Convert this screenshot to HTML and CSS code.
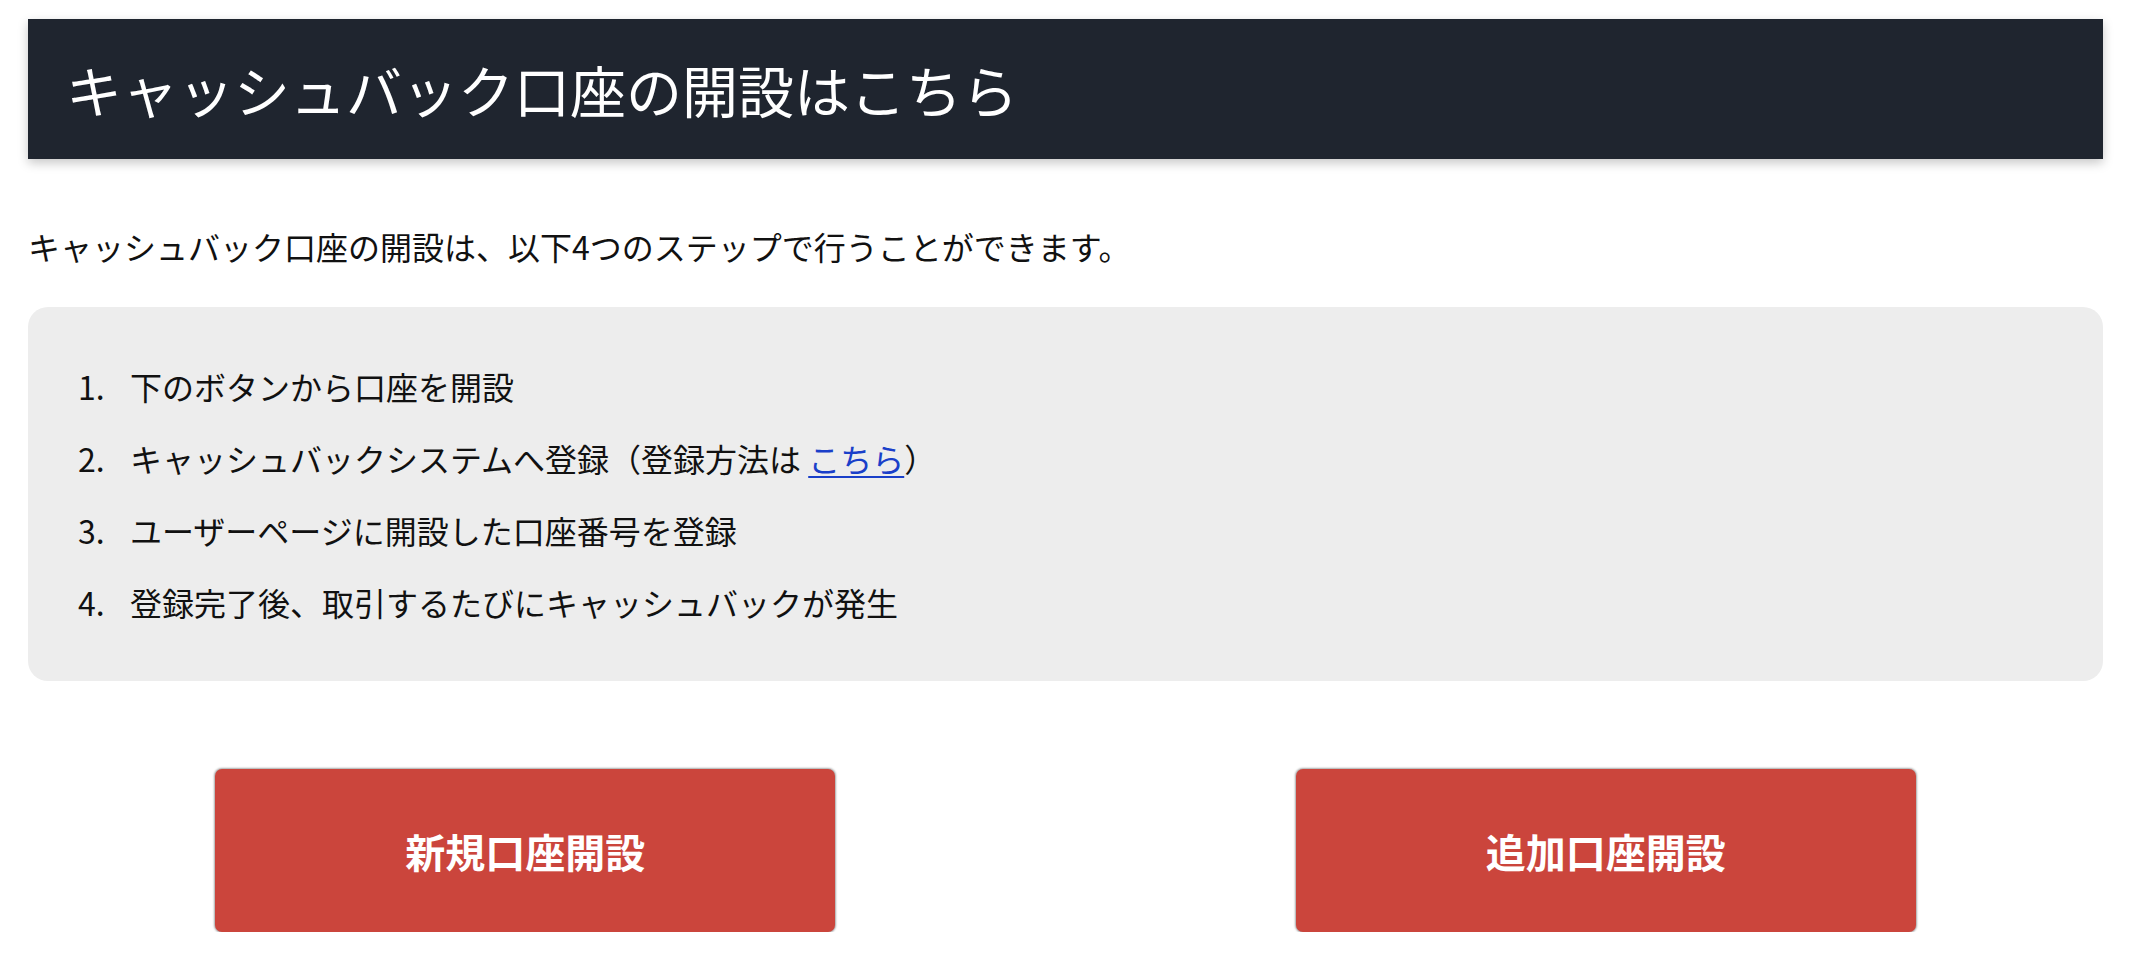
FILE: index.html
```html
<!DOCTYPE html>
<html lang="ja">
<head>
<meta charset="utf-8">
<title>キャッシュバック口座の開設はこちら</title>
<link rel="stylesheet" href="styles.css">
</head>
<body>
<div class="page">
  <header class="title-bar">
    <h1 class="title">キャッシュバック口座の開設はこちら</h1>
  </header>
  <p class="intro">キャッシュバック口座の開設は、以下4つのステップで行うことができます。</p>
  <section class="steps-box">
    <ol class="steps">
      <li class="step"><span class="num">1.</span><span class="step-text">下のボタンから口座を開設</span></li>
      <li class="step"><span class="num">2.</span><span class="step-text">キャッシュバックシステムへ登録（登録方法は <a class="link" href="#">こちら</a>）</span></li>
      <li class="step"><span class="num">3.</span><span class="step-text">ユーザーページに開設した口座番号を登録</span></li>
      <li class="step"><span class="num">4.</span><span class="step-text">登録完了後、取引するたびにキャッシュバックが発生</span></li>
    </ol>
  </section>
  <div class="buttons">
    <a class="btn" href="#">新規口座開設</a>
    <a class="btn" href="#">追加口座開設</a>
  </div>
</div>
</body>
</html>
```
FILE: styles.css
```css
html, body {
  margin: 0;
  padding: 0;
  background: #ffffff;
}
body {
  font-family: "Noto Sans CJK JP", "Noto Sans", sans-serif;
  color: #111111;
}
.page {
  padding: 19px 27px 0 28px;
}
.title-bar {
  height: 140px;
  background: #1f252f;
  display: flex;
  align-items: center;
  padding-left: 38px;
  box-shadow: 0 4px 10px rgba(0, 0, 0, 0.22);
}
.title {
  margin: 0;
  font-size: 56px;
  font-weight: 400;
  line-height: 1;
  color: #ffffff;
}
.intro {
  margin: 65px 0 0 0;
  font-size: 32px;
  line-height: 44px;
}
.steps-box {
  margin-top: 39px;
  background: #ededed;
  border-radius: 20px;
  padding: 57px 0 57px 50px;
}
.steps {
  list-style: none;
  margin: 0;
  padding: 0;
  display: flex;
  flex-direction: column;
  gap: 28px;
}
.step {
  display: flex;
  font-size: 32px;
  line-height: 44px;
  color: #111111;
}
.num {
  width: 52px;
  flex: none;
}
.link {
  color: #1a3fc9;
  text-decoration: underline;
  text-underline-offset: 4px;
  text-decoration-thickness: 2px;
}
.buttons {
  margin-top: 88px;
  display: grid;
  grid-template-columns: 1fr 1fr;
  column-gap: 86px;
  justify-items: center;
}
.btn {
  width: 620px;
  height: 163px;
  box-sizing: border-box;
  display: flex;
  align-items: center;
  justify-content: center;
  background: #cb453c;
  border-radius: 7px;
  box-shadow: 0 0 2px 1px rgba(0, 0, 0, 0.35);
  color: #ffffff;
  font-size: 40px;
  font-weight: 700;
  text-decoration: none;
}
```
